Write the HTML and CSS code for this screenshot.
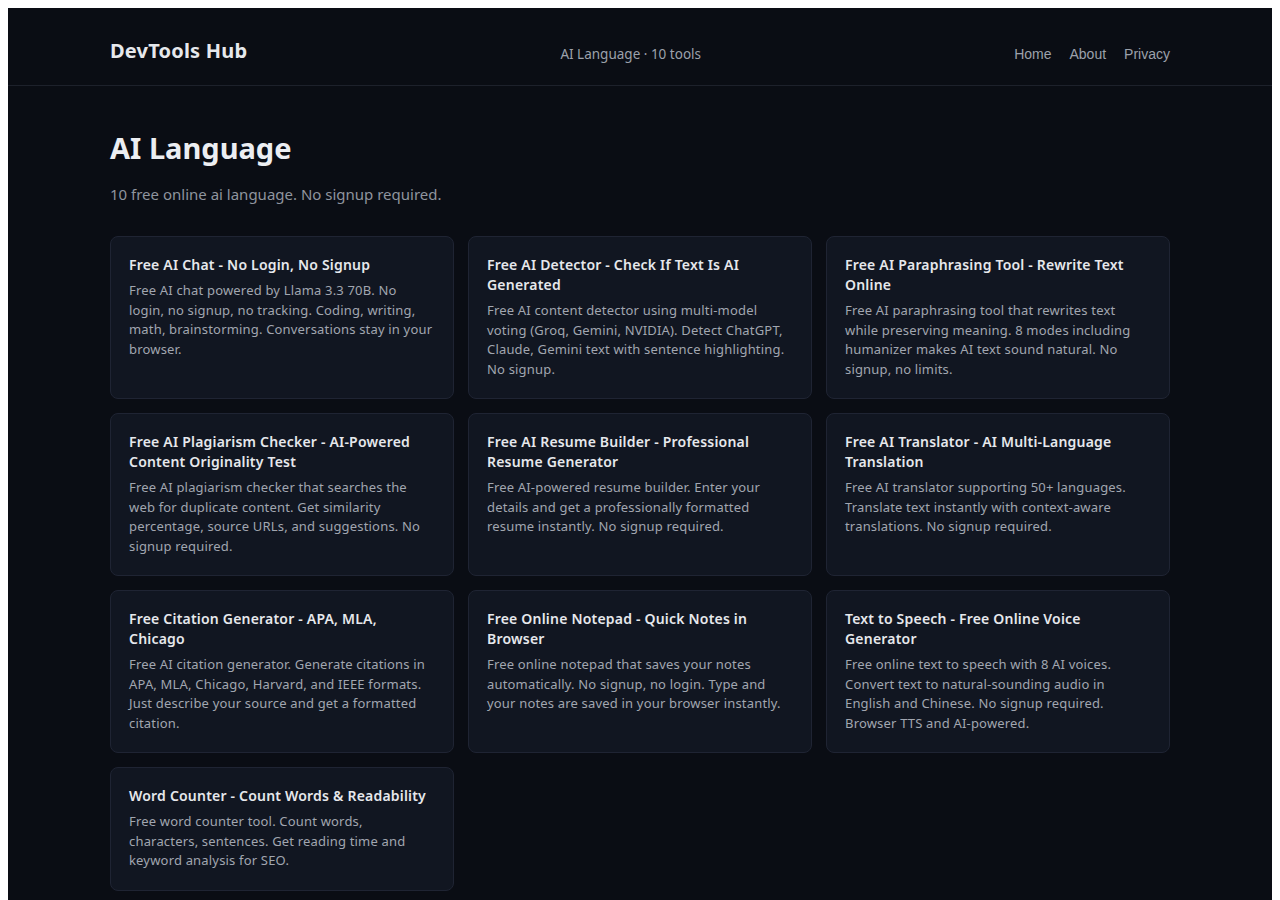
FILE: index.html
```html
<!DOCTYPE html>
<html lang="en">
<head>
<meta charset="utf-8">
<title>AI Language - DevTools Hub</title>
<link rel="stylesheet" href="styles.css">
</head>
<body>
<div class="page">
  <header class="site-header">
    <div class="container header-inner">
      <a class="logo" href="#">DevTools Hub</a>
      <span class="header-meta">AI Language · 10 tools</span>
      <nav class="nav">
        <a href="#">Home</a>
        <a href="#">About</a>
        <a href="#">Privacy</a>
      </nav>
    </div>
  </header>
  <main class="container main">
    <h1 class="title">AI Language</h1>
    <p class="subtitle">10 free online ai language. No signup required.</p>
    <div class="grid">
      <a class="card" href="#"><h2>Free AI Chat - No Login, No Signup</h2><p>Free AI chat powered by Llama 3.3 70B. No login, no signup, no tracking. Coding, writing, math, brainstorming. Conversations stay in your browser.</p></a>
      <a class="card" href="#"><h2>Free AI Detector - Check If Text Is AI Generated</h2><p>Free AI content detector using multi-model voting (Groq, Gemini, NVIDIA). Detect ChatGPT, Claude, Gemini text with sentence highlighting. No signup.</p></a>
      <a class="card" href="#"><h2>Free AI Paraphrasing Tool - Rewrite Text Online</h2><p>Free AI paraphrasing tool that rewrites text while preserving meaning. 8 modes including humanizer makes AI text sound natural. No signup, no limits.</p></a>
      <a class="card" href="#"><h2>Free AI Plagiarism Checker - AI-Powered Content Originality Test</h2><p>Free AI plagiarism checker that searches the web for duplicate content. Get similarity percentage, source URLs, and suggestions. No signup required.</p></a>
      <a class="card" href="#"><h2>Free AI Resume Builder - Professional Resume Generator</h2><p>Free AI-powered resume builder. Enter your details and get a professionally formatted resume instantly. No signup required.</p></a>
      <a class="card" href="#"><h2>Free AI Translator - AI Multi-Language Translation</h2><p>Free AI translator supporting 50+ languages. Translate text instantly with context-aware translations. No signup required.</p></a>
      <a class="card" href="#"><h2>Free Citation Generator - APA, MLA, Chicago</h2><p>Free AI citation generator. Generate citations in APA, MLA, Chicago, Harvard, and IEEE formats. Just describe your source and get a formatted citation.</p></a>
      <a class="card" href="#"><h2>Free Online Notepad - Quick Notes in Browser</h2><p>Free online notepad that saves your notes automatically. No signup, no login. Type and your notes are saved in your browser instantly.</p></a>
      <a class="card" href="#"><h2>Text to Speech - Free Online Voice Generator</h2><p>Free online text to speech with 8 AI voices. Convert text to natural-sounding audio in English and Chinese. No signup required. Browser TTS and AI-powered.</p></a>
      <a class="card" href="#"><h2>Word Counter - Count Words &amp; Readability</h2><p>Free word counter tool. Count words, characters, sentences. Get reading time and keyword analysis for SEO.</p></a>
    </div>
  </main>
</div>
</body>
</html>
```

FILE: styles.css
```css
* { box-sizing: border-box; }
html { background: #ffffff; }
body {
  margin: 8px;
  background: #ffffff;
  font-family: "Noto Sans", "Liberation Sans", sans-serif;
}
.page {
  background: #0a0d14;
  min-height: 892px;
  color: #e6e8ec;
}
.container {
  max-width: 1060px;
  margin: 0 auto;
}
.site-header {
  border-bottom: 1px solid #1d212b;
}
.header-inner {
  height: 77px;
  display: flex;
  align-items: center;
  justify-content: space-between;
  padding-top: 15px;
}
.logo {
  font-size: 20px;
  font-weight: 700;
  letter-spacing: 0.2px;
  color: #e6e8ec;
  text-decoration: none;
  margin-top: -8px;
}
.header-meta {
  font-size: 13.5px;
  color: #9ca1ab;
}
.nav {
  display: flex;
  gap: 18px;
  font-family: "Liberation Sans", Arial, sans-serif;
  font-size: 14px;
}
.nav a {
  color: #9ca1ab;
  text-decoration: none;
}
.main {
  padding-top: 42px;
  padding-bottom: 24px;
}
.title {
  margin: 0;
  font-size: 29px;
  line-height: 40px;
  font-weight: 700;
  color: #eceef2;
}
.subtitle {
  margin: 14px 0 0;
  font-size: 15px;
  line-height: 24px;
  color: #8f949e;
}
.grid {
  margin-top: 30px;
  display: grid;
  grid-template-columns: repeat(3, 1fr);
  gap: 14px;
}
.card {
  display: block;
  padding: 18px 18px 19px;
  background: #111621;
  border: 1px solid #1f2433;
  border-radius: 8px;
  text-decoration: none;
}
.card h2 {
  margin: 0;
  font-size: 14px;
  line-height: 20px;
  font-weight: 600;
  letter-spacing: 0.2px;
  color: #e6e8ec;
}
.card p {
  margin: 6px 0 0;
  font-size: 13px;
  line-height: 19.5px;
  letter-spacing: 0.18px;
  color: #a1a6b0;
}
```
